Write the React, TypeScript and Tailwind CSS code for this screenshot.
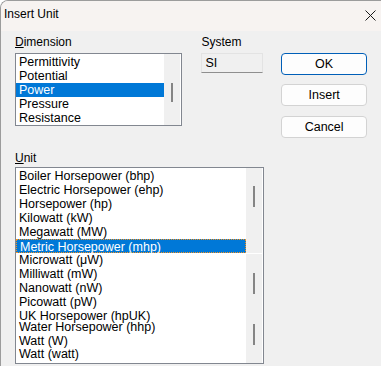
import React from 'react'

const font = { fontFamily: '"Liberation Sans", Arial, sans-serif' }

interface Row {
  label: string
  h?: string
  selected?: boolean
  focus?: boolean
}

const dimensions: Row[] = [
  { label: 'Permittivity' },
  { label: 'Potential' },
  { label: 'Power', selected: true },
  { label: 'Pressure' },
  { label: 'Resistance' },
]

const units: Row[] = [
  { label: 'Boiler Horsepower (bhp)' },
  { label: 'Electric Horsepower (ehp)' },
  { label: 'Horsepower (hp)' },
  { label: 'Kilowatt (kW)' },
  { label: 'Megawatt (MW)' },
  { label: 'Metric Horsepower (mhp)', selected: true, focus: true },
  { label: 'Microwatt (μW)' },
  { label: 'Milliwatt (mW)' },
  { label: 'Nanowatt (nW)' },
  { label: 'Picowatt (pW)' },
  { label: 'UK Horsepower (hpUK)', h: 'h-[11px]' },
  { label: 'Water Horsepower (hhp)' },
  { label: 'Watt (W)', h: 'h-[13px]' },
  { label: 'Watt (watt)' },
]

function ListRow({ row }: { row: Row }) {
  return (
    <div
      className={[
        'shrink-0 overflow-visible whitespace-nowrap pl-[3px] text-[12.5px] leading-[14px]',
        row.h ?? 'h-[14px]',
        row.selected ? 'bg-[#0078d7] text-white' : 'text-black',
        row.focus ? 'border border-dotted border-[#f7931e] pl-[2px] leading-[12px]' : '',
      ].join(' ')}
    >
      {row.label}
    </div>
  )
}

function Thumb({ className }: { className: string }) {
  return <div className={'absolute left-[7px] w-[2px] bg-[#858585] ' + className} />
}

export default function App() {
  return (
    <div
      className="w-[381px] h-[366px] flex flex-col overflow-hidden rounded-tl-[8px] border-l border-t border-[#9c9c9c] bg-[#f0f0f0] text-black"
      style={font}
    >
      {/* Title bar */}
      <div className="h-[30px] shrink-0 flex items-start justify-between bg-[#f7f3f1] pl-[3px] pr-[6px] pt-[6px]">
        <span className="text-[12px] leading-[14px]">Insert Unit</span>
        <svg width="11" height="11" viewBox="0 0 11 11" className="mt-[3px] mr-[-1px]">
          <path d="M0.5 0.5 L10.5 10.5 M10.5 0.5 L0.5 10.5" stroke="#1a1a1a" strokeWidth="1" fill="none" />
        </svg>
      </div>

      {/* Client area */}
      <div className="flex-1 px-[14px] pt-[4px]">
        <div className="flex items-start">
          <div className="w-[168px]">
            <div className="text-[12px] leading-[14px]">
              <span className="underline">D</span>imension
            </div>
            <div className="mt-[4px] h-[73px] flex border border-[#828790] bg-white">
              <div className="flex-1 flex flex-col pt-px overflow-hidden">
                {dimensions.map(r => <ListRow key={r.label} row={r} />)}
              </div>
              <div className="relative w-[17px] bg-[#f0f0f0] border-r border-white">
                <Thumb className="top-[29px] h-[19px]" />
              </div>
            </div>
          </div>

          <div className="ml-[19px] w-[62px]">
            <div className="text-[12px] leading-[14px]">System</div>
            <div className="mt-[4px] h-[20px] border border-[#e3e3e3] border-b-[#8f8f8f] bg-[#f0f0f0] pl-[3px] text-[12.5px] leading-[18px]">
              SI
            </div>
          </div>

          <div className="ml-[18px] w-[86px] pt-[18px] flex flex-col">
            <button className="h-[22px] rounded-[4px] border border-[#005fb8] bg-[#fdfdfd] text-[12.5px] leading-[20px]">
              OK
            </button>
            <button className="mt-[9px] h-[22px] rounded-[4px] border border-[#d3d3d3] bg-[#fdfdfd] text-[12.5px] leading-[20px]">
              Insert
            </button>
            <button className="mt-[10px] h-[22px] rounded-[4px] border border-[#d3d3d3] bg-[#fdfdfd] text-[12.5px] leading-[20px]">
              Cancel
            </button>
          </div>
        </div>

        <div className="mt-[13px] text-[12px] leading-[14px]">
          <span className="underline">U</span>nit
        </div>
        <div className="mt-[2px] w-[249px] h-[197px] flex border border-[#828790] bg-white">
          <div className="flex-1 flex flex-col pt-px overflow-hidden">
            {units.map(r => <ListRow key={r.label} row={r} />)}
          </div>
          <div className="w-[17px] flex flex-col border-r border-white">
            <div className="relative h-[85px] bg-[#f0f0f0]">
              <Thumb className="top-[18px] h-[21px]" />
            </div>
            <div className="h-px bg-white" />
            <div className="relative flex-1 bg-[#f0f0f0]">
              <Thumb className="top-[19px] h-[21px]" />
              <Thumb className="top-[70px] h-[21px]" />
            </div>
          </div>
        </div>
      </div>
    </div>
  )
}
